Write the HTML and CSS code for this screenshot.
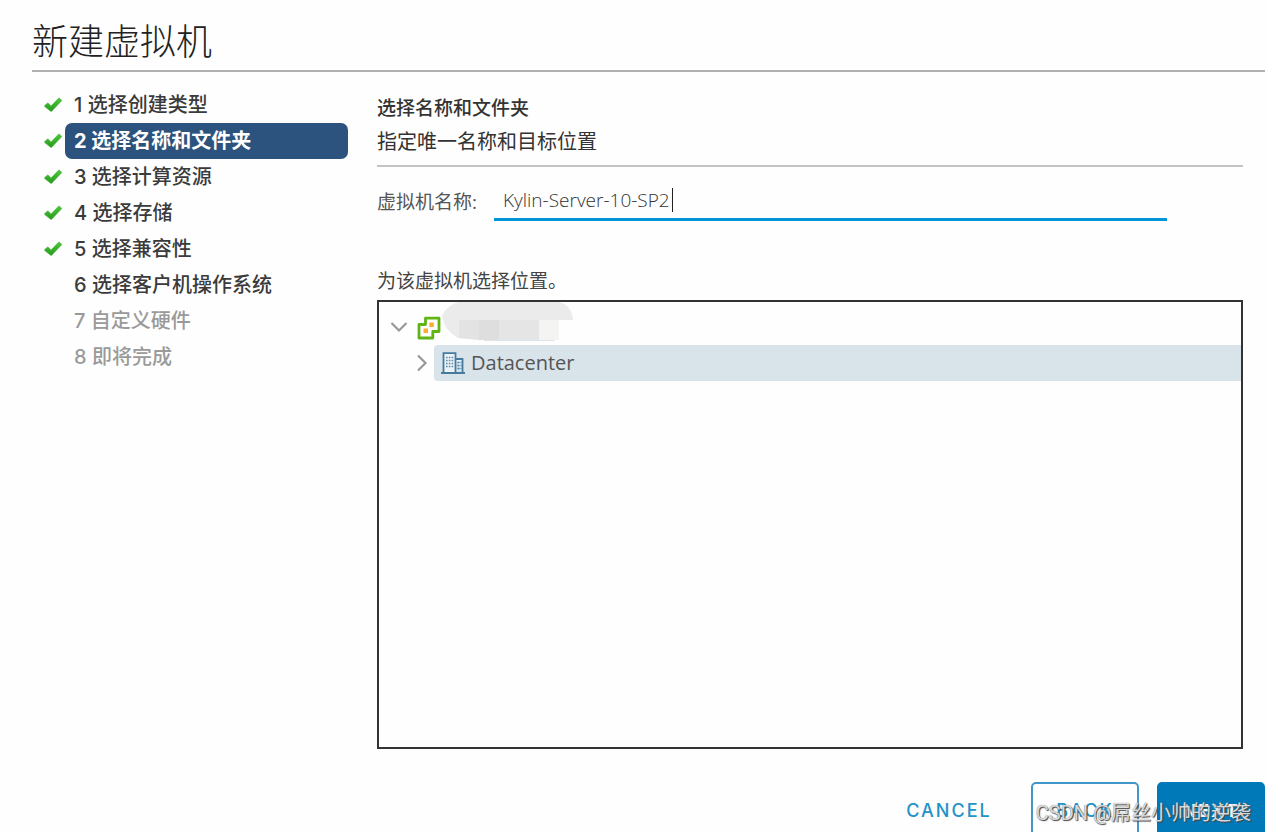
FILE: index.html
```html
<!DOCTYPE html>
<html lang="zh-CN">
<head>
<meta charset="utf-8">
<title>新建虚拟机</title>
<link rel="stylesheet" href="styles.css">
</head>
<body>
<svg class="defs" aria-hidden="true">
  <defs>
    <linearGradient id="green" x1="0" y1="0" x2="0" y2="1"><stop offset="0" stop-color="#4cc83a"/><stop offset="1" stop-color="#259a1c"/></linearGradient>
    <symbol id="check" viewBox="0 0 20 18"><path d="M1.7 9.6 4.3 7.2Q4.8 6.800 5.300 7.200L8 9.900 15.300 2.400Q15.900 1.800 16.500 2.300L18.400 4Q18.900 4.500 18.400 5L8.700 15.200Q8 15.900 7.300 15.100L1.700 10.600Q1.200 10.100 1.700 9.600Z" fill="url(#green)" stroke="#36ac29" stroke-width=".5"/></symbol>
  </defs>
</svg>
<div class="wizard">
  <header class="title"><h1>新建虚拟机</h1></header>
  <div class="body">
    <nav class="steps" aria-label="步骤">
      <ol>
        <li><svg class="check"><use href="#check"/></svg><a href="#s1">1 选择创建类型</a></li>
        <li><svg class="check"><use href="#check"/></svg><a href="#s2" class="active" aria-current="step">2 选择名称和文件夹</a></li>
        <li><svg class="check"><use href="#check"/></svg><a href="#s3">3 选择计算资源</a></li>
        <li><svg class="check"><use href="#check"/></svg><a href="#s4">4 选择存储</a></li>
        <li><svg class="check"><use href="#check"/></svg><a href="#s5">5 选择兼容性</a></li>
        <li><span class="check"></span><a href="#s6">6 选择客户机操作系统</a></li>
        <li><span class="check"></span><a class="disabled" href="#s7">7 自定义硬件</a></li>
        <li><span class="check"></span><a class="disabled" href="#s8">8 即将完成</a></li>
      </ol>
    </nav>
    <main class="content">
      <div class="intro">
        <h2>选择名称和文件夹</h2>
        <p>指定唯一名称和目标位置</p>
      </div>
      <div class="field">
        <label for="name">虚拟机名称:</label>
        <div class="input-line"><input id="name" type="text" value="Kylin-Server-10-SP2" size="19"><span class="caret"></span></div>
      </div>
      <p class="location">为该虚拟机选择位置。</p>
      <div class="tree" role="tree">
        <div class="node root" role="treeitem" aria-expanded="true">
          <button class="toggle" type="button" aria-label="折叠"><svg width="20" height="14" viewBox="0 0 20 14"><path d="M2.500 3 10 10.500 17.500 3" fill="none" stroke="#999" stroke-width="2.200"/></svg></button>
          <svg class="vcenter" width="24" height="24" viewBox="0 0 24 24"><path d="M8.500 2.200H22V15.500H15.800V22H2V8.500H8.500Z" fill="#fff" stroke="#60b515" stroke-width="2.800" stroke-linejoin="round"/><path d="M12.300 6.500h4.500v4.500h-4.500zM6.500 12.500h4.500v4.500h-4.500z" fill="#fdac2b"/></svg>
          <svg class="mask" width="132" height="40" viewBox="0 0 132 40" aria-hidden="true"><path d="M17 0H117Q130 3 131 18H117V38H42L16 36Q2 28 0 14Q5 3 17 0Z" fill="#ebebeb"/><path d="M17 18H37V38L17 36Z" fill="#e3e3e3"/><path d="M37 18H57V38H37Z" fill="#dedede"/><path d="M57 18H97V38H57Z" fill="#e5e5e5"/><path d="M97 18H117V38H97Z" fill="#f4f4f3"/><path d="M42 38.500H113" stroke="#dce4ec"/></svg>
        </div>
        <div class="node child" role="treeitem">
          <button class="toggle" type="button" aria-label="展开"><svg width="14" height="20" viewBox="0 0 14 20"><path d="M3 2.500 10.500 10 3 17.500" fill="none" stroke="#999" stroke-width="2.200"/></svg></button>
          <div class="row">
            <svg width="24" height="24" viewBox="0 0 24 24"><path d="M2.500 22V2.200H14.500V22M14.500 8H21.500V22M0 22H24" fill="#edf2f6" stroke="#447b9e" stroke-width="1.800"/><path d="M5 6.500h8M5 9.500h8M5 12.500h8M5 15.500h8" stroke="#5c8cab" stroke-width="1.500" stroke-dasharray="1.600 1.200"/><path d="M16.500 11.500h4M16.500 14.500h4M16.500 17.500h4" stroke="#447b9e" stroke-width="1.500" stroke-dasharray="2 1"/></svg>
            <span>Datacenter</span>
          </div>
        </div>
      </div>
    </main>
  </div>
  <footer class="actions">
    <button type="button" class="btn link">CANCEL</button>
    <button type="button" class="btn outline">BACK</button>
    <button type="button" class="btn primary">NEXT</button>
  </footer>
  <div class="watermark">CSDN @屌丝小帅的逆袭</div>
</div>
</body>
</html>
```
FILE: styles.css
```css
* { box-sizing: border-box; }
html, body { margin: 0; height: 100%; overflow: hidden; }
body {
  background: #fefefe;
  color: #333;
  font: 20px/36px "Open Sans", "Noto Sans CJK SC", sans-serif;
}
h1, h2, p, ol { margin: 0; padding: 0; font-weight: 400; }
button { margin: 0; padding: 0; border: 0; background: none; font: inherit; }
.defs { position: absolute; width: 0; height: 0; }
.wizard {
  position: relative;
  display: flex;
  flex-direction: column;
  min-height: calc(100vh + 4px);
  padding: 12px 2px 0 32px;
}
.title { padding-bottom: 4px; border-bottom: 2px solid #b0b0b0; }
.title h1 {
  font: 300 36px/54px "Noto Sans CJK SC", sans-serif;
  color: #222;
}
.body { display: flex; flex: 1; }
.steps { flex: 0 0 316px; padding: 15px 0 0 11px; }
.steps ol { list-style: none; }
.steps li { display: flex; align-items: center; gap: 2px; }
.check { width: 20px; height: 18px; flex: none; }
.steps a {
  flex: 1;
  padding-left: 9px;
  border-radius: 7px;
  font-family: Inter, "Noto Sans CJK SC", sans-serif;
  font-size: 20px;
  font-weight: 500;
  color: #3b3b3b;
  text-decoration: none;
}
.steps a.active { background: #2c537d; color: #fff; font-weight: 700; }
.steps a.disabled { color: #9a9a9a; }
.content {
  display: flex;
  flex-direction: column;
  flex: 1;
  min-width: 0;
  margin: 0 22px 0 29px;
}
.intro { padding-top: 20px; border-bottom: 2px solid #c3c3c3; }
.intro h2, .intro p { font-size: 20px; line-height: 33px; }
.intro h2 { font-weight: 500; }
.intro p { margin-bottom: 7px; }
.field { display: flex; margin-top: 17px; margin-right: 76px; }
.field label { width: 117px; color: #555; }
.input-line {
  display: flex;
  align-items: center;
  flex: 1;
  height: 37px;
  padding: 0 0 2px 9px;
  border-bottom: 3px solid #0095d9;
}
.field input {
  width: 169px;
  padding: 0;
  border: 0;
  outline: 0;
  background: none;
  font: 300 19px/30px "Open Sans", sans-serif;
  color: #333;
}
.caret { width: 1px; height: 24px; background: #222; }
.location { margin-top: 42px; color: #444; font-size: 19px; }
.field label, .intro h2 { font-size: 19px; }
.tree { flex: 1; border: 2px solid #333; margin-top: 1px; }
.node { display: flex; align-items: center; }
.root { height: 43px; padding: 0 0 0 10px; }
.toggle { display: flex; }
.root .toggle { margin-top: 7px; }
.vcenter { margin: 8px 1px 0 8px; }
.mask { margin-bottom: 4px; }
.child { padding-left: 36px; gap: 5px; }
.row {
  display: flex;
  align-items: center;
  gap: 6px;
  flex: 1;
  height: 36px;
  padding-left: 7px;
  border-radius: 4px 0 0 4px;
  background: #d9e3ea;
  color: #555;
}
.actions { display: flex; justify-content: flex-end; margin-top: 33px; }
.btn {
  width: 108px;
  height: 54px;
  padding-top: 3px;
  border: 2px solid transparent;
  border-radius: 5px;
  font: 500 18px/47px Inter, sans-serif;
  letter-spacing: 2px;
  color: #2491c9;
}
.link { margin-right: 28px; }
.outline { margin-right: 18px; border-color: #4297c8; }
.primary { background: #0079b8; border-color: #0079b8; color: #fff; font-weight: 700; }
.watermark {
  position: absolute;
  right: 16px;
  bottom: 5px;
  font: 20px/36px Roboto, "Noto Sans CJK SC", sans-serif;
  color: rgba(255, 255, 255, .8);
  text-shadow: 1px 1px 1px #444, 0 0 1px #555;
  pointer-events: none;
}
```
